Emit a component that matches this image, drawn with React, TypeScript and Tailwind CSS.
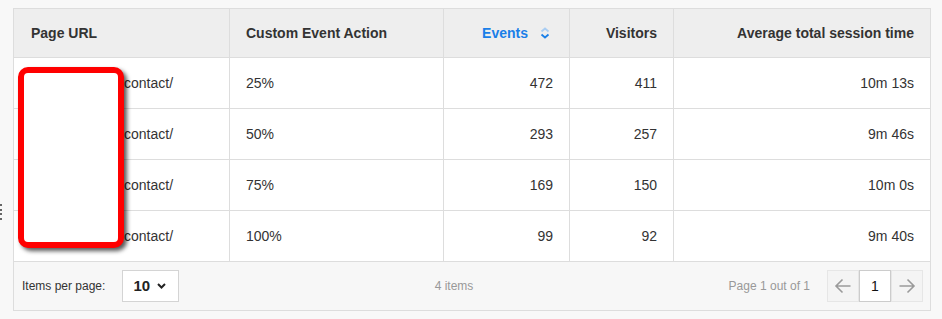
import React from 'react';

const cols = 'grid grid-cols-[215px_214px_126px_104px_257px]';

const rows = [
  { action: '25%', events: '472', visitors: '411', time: '10m 13s' },
  { action: '50%', events: '293', visitors: '257', time: '9m 46s' },
  { action: '75%', events: '169', visitors: '150', time: '10m 0s' },
  { action: '100%', events: '99', visitors: '92', time: '9m 40s' },
];

const SortIcon: React.FC = () => (
  <svg width="10" height="12" viewBox="0 0 10 12" className="ml-[12px]">
    <path d="M1.5 4.5L5 1.5l3.5 3" fill="none" stroke="#a9cdf3" strokeWidth="1.8" />
    <path d="M1.5 7.5L5 10.5l3.5-3" fill="none" stroke="#1a7fe8" strokeWidth="1.8" />
  </svg>
);

const Arrow: React.FC<{ dir: 'left' | 'right' }> = ({ dir }) => (
  <svg width="18" height="18" viewBox="0 0 18 18" className={dir === 'right' ? 'rotate-180' : ''}>
    <path d="M16.5 9H2M8.5 2.5L2 9l6.5 6.5" fill="none" stroke="#9a9a9a" strokeWidth="1.6" />
  </svg>
);

const App: React.FC = () => {
  return (
    <div className="relative min-h-[319px] bg-[#f8f8f8] pt-[8px] pl-[13px] font-['Liberation_Sans',Arial,sans-serif] text-[14px] text-[#333333]">
      <div className="w-[918px] border border-[#dddddd]">
        <div className={`${cols} h-[49px] border-b border-[#dddddd] bg-[#eeeeee] font-bold`}>
          <div className="flex items-center pl-[17px]">Page URL</div>
          <div className="flex items-center border-l border-[#dddddd] pl-4">Custom Event Action</div>
          <div className="flex items-center justify-end border-l border-[#dddddd] pr-[19px] text-[#1a7fe8]">
            Events
            <SortIcon />
          </div>
          <div className="flex items-center justify-end border-l border-[#dddddd] pr-4">Visitors</div>
          <div className="flex items-center justify-end border-l border-[#dddddd] pr-4">
            Average total session time
          </div>
        </div>

        {rows.map((r) => (
          <div key={r.action} className={`${cols} h-[51px] border-b border-[#dddddd] bg-white`}>
            <div className="flex items-center pl-[110px]">contact/</div>
            <div className="flex items-center border-l border-[#dddddd] pl-4">{r.action}</div>
            <div className="flex items-center justify-end border-l border-[#dddddd] pr-4">{r.events}</div>
            <div className="flex items-center justify-end border-l border-[#dddddd] pr-4">{r.visitors}</div>
            <div className="flex items-center justify-end border-l border-[#dddddd] pr-4">{r.time}</div>
          </div>
        ))}

        <div className="flex h-[48px] items-center bg-[#f7f7f7] pl-2 pr-[7px] text-[12px]">
          <span className="text-[#333333]">Items per page:</span>
          <div className="ml-[17px] flex h-[32px] w-[57px] items-center justify-between border border-[#d4d4d4] bg-white pl-[10px] pr-[12px]">
            <span className="text-[15px] font-bold text-[#222222]">10</span>
            <svg width="9" height="6" viewBox="0 0 9 6">
              <path d="M1 1l3.5 3.5L8 1" fill="none" stroke="#222222" strokeWidth="2" />
            </svg>
          </div>
          <div className="flex-1 text-center text-[#999999]">4 items</div>
          <span className="text-[#999999]">Page 1 out of 1</span>
          <div className="ml-[17px] flex h-[32px]">
            <button className="flex w-[32px] items-center justify-center border border-[#e6e6e6] bg-[#f4f4f4]">
              <Arrow dir="left" />
            </button>
            <div className="flex w-[32px] items-center justify-center border border-[#cccccc] bg-white text-[14px] text-[#111111]">
              1
            </div>
            <button className="flex w-[32px] items-center justify-center border border-[#e6e6e6] bg-[#f4f4f4]">
              <Arrow dir="right" />
            </button>
          </div>
        </div>
      </div>

      <div className="absolute left-[18px] top-[67px] h-[181px] w-[106px] rounded-[10px] border-[6px] border-[#ff0000] bg-white shadow-[3px_3px_4px_rgba(0,0,0,0.65)]" />

      <div className="absolute left-0 top-[204px] flex flex-col gap-[2.5px]">
        <span className="h-[2px] w-[2px] bg-[#666666]" />
        <span className="h-[2px] w-[2px] bg-[#666666]" />
        <span className="h-[2px] w-[2px] bg-[#666666]" />
        <span className="h-[2px] w-[2px] bg-[#666666]" />
      </div>
    </div>
  );
};

export default App;
